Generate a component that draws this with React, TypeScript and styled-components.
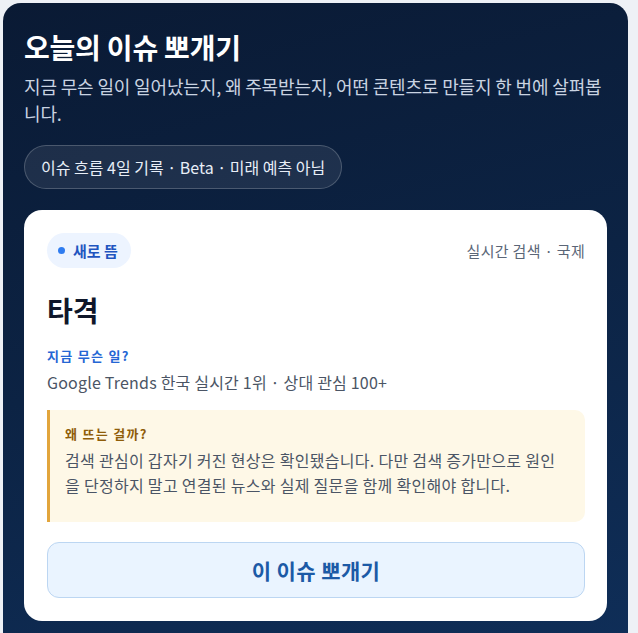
import React from "react";
import styled, { createGlobalStyle } from "styled-components";

const GlobalStyle = createGlobalStyle`
  html, body {
    margin: 0;
    padding: 0;
    background: #eef1f6;
  }
  body {
    font-family: "Noto Sans CJK KR", "Noto Sans", sans-serif;
  }
  * {
    box-sizing: border-box;
  }
`;

const Page = styled.div`
  padding: 3px 10px 0 3px;
`;

const Panel = styled.section`
  background: linear-gradient(165deg, #0a1a34 0%, #0c2344 50%, #0f2e58 100%);
  border-radius: 18px 18px 0 0;
  padding: 25px 21px 12px 21px;
  min-height: 640px;
`;

const Title = styled.h1`
  margin: 0;
  color: #ffffff;
  font-size: 28px;
  font-weight: 700;
  letter-spacing: -0.2px;
  line-height: 38px;
`;

const Subtitle = styled.p`
  margin: 7px 0 0;
  color: #c9d3e1;
  font-size: 18px;
  line-height: 27px;
  letter-spacing: -0.15px;
`;

const Pill = styled.div`
  display: inline-flex;
  align-items: center;
  height: 44px;
  margin-top: 18px;
  padding: 0 16px;
  border-radius: 22px;
  border: 1px solid rgba(255, 255, 255, 0.2);
  background: rgba(255, 255, 255, 0.08);
  color: #e8eef7;
  font-size: 16px;
`;

const Card = styled.article`
  margin-top: 21px;
  background: #ffffff;
  border-radius: 18px;
  padding: 23px 22px 23px 23px;
`;

const CardHead = styled.div`
  display: flex;
  align-items: center;
  justify-content: space-between;
`;

const Badge = styled.span`
  display: inline-flex;
  align-items: center;
  gap: 8px;
  height: 35px;
  padding: 0 13px 0 11px;
  border-radius: 18px;
  background: #edf4ff;
  color: #1f55c0;
  font-size: 15px;
  font-weight: 700;
`;

const Dot = styled.span`
  width: 7px;
  height: 7px;
  border-radius: 50%;
  background: #2f7cf0;
`;

const Meta = styled.span`
  color: #5b6677;
  font-size: 15px;
  letter-spacing: 0.3px;
`;

const IssueName = styled.h2`
  margin: 22px 0 0;
  color: #0f172a;
  font-size: 28px;
  font-weight: 700;
  line-height: 40px;
`;

const Label = styled.div<{ $tone: "blue" | "amber" }>`
  color: ${(p) => (p.$tone === "blue" ? "#2566d4" : "#8f5d09")};
  font-size: 13px;
  font-weight: 700;
  letter-spacing: 1.3px;
  line-height: 20px;
`;

const Section = styled.div`
  margin-top: 16px;
`;

const Summary = styled.p`
  margin: 4px 0 0;
  color: #4b5565;
  font-size: 16px;
  line-height: 24px;
  letter-spacing: 0.2px;
`;

const Callout = styled.div`
  margin-top: 16px;
  padding: 14px 15px 25px 15px;
  background: #fef8e7;
  border-left: 3px solid #e2a53c;
  border-radius: 0 10px 10px 0;
`;

const CalloutText = styled.p`
  margin: 4px 0 0;
  color: #4b5565;
  font-size: 16px;
  line-height: 24.5px;
  letter-spacing: 0.3px;
`;

const ActionButton = styled.button`
  display: flex;
  align-items: center;
  justify-content: center;
  width: 100%;
  height: 56px;
  margin-top: 20px;
  border: 1px solid #bcd6f2;
  border-radius: 12px;
  background: #eaf4ff;
  color: #1c5aa6;
  font-family: inherit;
  font-size: 21px;
  font-weight: 700;
  letter-spacing: 0.4px;
  cursor: pointer;
`;

export default function App() {
  return (
    <>
      <GlobalStyle />
      <Page>
        <Panel>
          <Title>오늘의 이슈 뽀개기</Title>
          <Subtitle>
            지금 무슨 일이 일어났는지, 왜 주목받는지, 어떤 콘텐츠로 만들지 한 번에 살펴봅니다.
          </Subtitle>
          <Pill>이슈 흐름 4일 기록 · Beta · 미래 예측 아님</Pill>
          <Card>
            <CardHead>
              <Badge>
                <Dot />
                새로 뜸
              </Badge>
              <Meta>실시간 검색 · 국제</Meta>
            </CardHead>
            <IssueName>타격</IssueName>
            <Section>
              <Label $tone="blue">지금 무슨 일?</Label>
              <Summary>Google Trends 한국 실시간 1위 · 상대 관심 100+</Summary>
            </Section>
            <Callout>
              <Label $tone="amber">왜 뜨는 걸까?</Label>
              <CalloutText>
                검색 관심이 갑자기 커진 현상은 확인됐습니다. 다만 검색 증가만으로 원인을 단정하지 말고 연결된 뉴스와 실제 질문을 함께 확인해야 합니다.
              </CalloutText>
            </Callout>
            <ActionButton>이 이슈 뽀개기</ActionButton>
          </Card>
        </Panel>
      </Page>
    </>
  );
}
